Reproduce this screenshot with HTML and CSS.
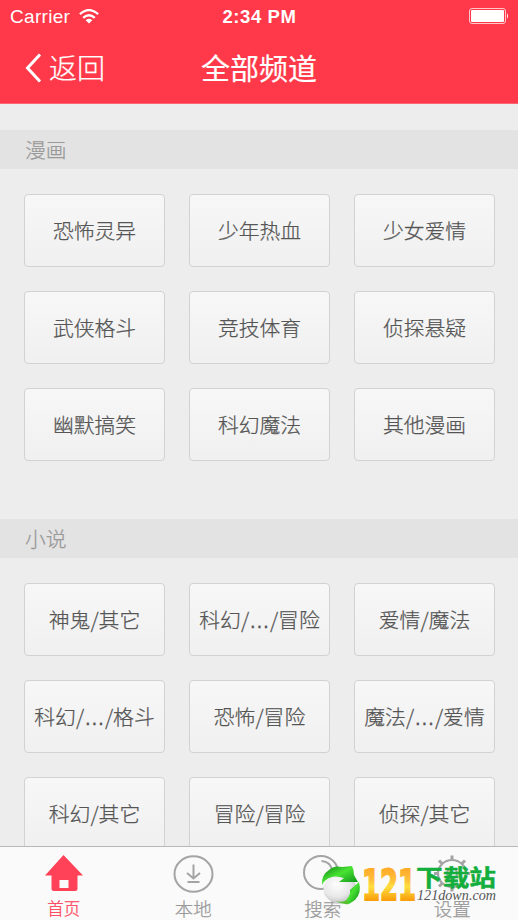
FILE: index.html
```html
<!DOCTYPE html>
<html lang="zh-CN">
<head>
<meta charset="utf-8">
<title>全部频道</title>
<link rel="stylesheet" href="styles.css">
</head>
<body>
<div class="app">
  <header class="top">
    <div class="status">
      <div class="carrier"><span>Carrier</span>
        <svg width="20" height="15" viewBox="0 0 20 15" fill="none" stroke="#fff" stroke-width="2.4"><path d="M.9 5.2Q10-3 19.1 5.2M4.2 8.8Q10 3.7 15.8 8.8"/><path d="M6.700 11.200Q10 8.300 13.300 11.200L10 14.500Z" fill="#fff" stroke="none"/></svg>
      </div>
      <div class="time">2:34 PM</div>
      <svg class="battery" width="40" height="17" viewBox="0 0 40 17"><rect x=".5" y=".5" width="36" height="15" rx="2.5" fill="none" stroke="#fff" stroke-opacity=".7"/><rect x="2" y="2" width="33" height="12" rx="1" fill="#fff"/><path d="M38 5Q40 8 38 11Z" fill="#fff"/></svg>
    </div>
    <nav class="nav">
      <div class="back"><svg width="17" height="30" viewBox="0 0 17 30" fill="none" stroke="#fff" stroke-width="3"><path d="M15 1.5 2.5 15 15 28.5"/></svg><span>返回</span></div>
      <h1>全部频道</h1>
    </nav>
  </header>
  <main>
    <section>
      <h2>漫画</h2>
      <div class="grid">
        <button>恐怖灵异</button><button>少年热血</button><button>少女爱情</button>
        <button>武侠格斗</button><button>竞技体育</button><button>侦探悬疑</button>
        <button>幽默搞笑</button><button>科幻魔法</button><button>其他漫画</button>
      </div>
    </section>
    <section>
      <h2>小说</h2>
      <div class="grid">
        <button>神鬼/其它</button><button>科幻/<i>…</i>/冒险</button><button>爱情/魔法</button>
        <button>科幻/<i>…</i>/格斗</button><button>恐怖/冒险</button><button>魔法/<i>…</i>/爱情</button>
        <button>科幻/其它</button><button>冒险/冒险</button><button>侦探/其它</button>
      </div>
    </section>
  </main>
  <footer class="tabs">
    <div class="tab active"><svg width="42" height="42" viewBox="0 0 42 42"><path d="M19.500 3 39 23.500h-5.500V36.500q0 2.500-2.500 2.500H10Q7.500 39 7.500 36.500V23.500H1Z" fill="#ff4257"/><rect x="15.500" y="28" width="9" height="8" fill="#fafafa"/></svg><span>首页</span></div>
    <div class="tab"><svg width="42" height="42" viewBox="0 0 42 42" fill="none" stroke="#a4a4a4" stroke-width="2"><ellipse cx="20.500" cy="22" rx="19" ry="17.800"/><path d="M20.500 12.500v13.500M14 21l6.500 5.500 6.500-5.500M14.500 30h12"/></svg><span>本地</span></div>
    <div class="tab"><svg width="42" height="42" viewBox="0 0 42 42" fill="none" stroke="#a4a4a4" stroke-width="2"><ellipse cx="18" cy="20.500" rx="17" ry="16.500"/><path d="M18.500 9q9 .5 11 10M30 32l9 8"/></svg><span>搜索</span></div>
    <div class="tab"><svg width="42" height="42" viewBox="0 0 42 42" fill="none" stroke="#a4a4a4" stroke-width="2.200"><ellipse cx="20" cy="21.500" rx="14" ry="13.500"/><circle cx="20" cy="21.500" r="5"/><path d="M20 8V3.500M20 35v4.500M6 21.500H2M34 21.500h4M10.500 12 7 8.500M29.500 12l3.500-3.500M10.500 31 7 34.500M29.500 31l3.500 3.500" stroke-width="3"/></svg><span>设置</span></div>
  </footer>
  <svg class="mark" width="190" height="56" viewBox="0 0 190 56">
    <defs>
      <linearGradient id="gold" gradientUnits="userSpaceOnUse" x1="0" y1="6" x2="0" y2="39"><stop offset="0" stop-color="#ffa726"/><stop offset=".4" stop-color="#ffc03a"/><stop offset=".6" stop-color="#ffdf3e"/><stop offset="1" stop-color="#f99f0d"/></linearGradient>
      <linearGradient id="leaf" x1="0" y1="0" x2="1" y2="1"><stop offset="0" stop-color="#087c12"/><stop offset=".45" stop-color="#49e333"/><stop offset="1" stop-color="#078915"/></linearGradient>
      <radialGradient id="ball" cx=".4" cy=".35" r=".7"><stop offset="0" stop-color="#fff"/><stop offset=".6" stop-color="#e8e8e8"/><stop offset="1" stop-color="#bbb"/></radialGradient>
    </defs>
    <ellipse cx="19" cy="28" rx="16.500" ry="14.500" fill="url(#ball)"/>
    <path d="M1 24Q0 14 8 9Q13 4 21 6L31 5Q33 9 33 14L37 21 18 21 23 17Q12 13 5 19Q2 21 1 24Z" fill="url(#leaf)"/>
    <path d="M38 21Q41 32 34 39L28 43 25 39Q30 34 29 29Z" fill="url(#leaf)"/>
    <path d="M15 40Q21 42 26 39L28 43Q21 44 15 40Z" fill="#58bf35"/>
    <text class="digits" x="41" y="38.500" textLength="54" lengthAdjust="spacingAndGlyphs" fill="url(#gold)" stroke="url(#gold)">121</text>
    <text class="name" x="95" y="25.300" textLength="80" lengthAdjust="spacingAndGlyphs">下载站</text>
    <text class="domain" x="96" y="38.500" textLength="79" lengthAdjust="spacingAndGlyphs">121down.com</text>
  </svg>
</div>
</body>
</html>
```
FILE: styles.css
```css
* { box-sizing: border-box; }
body { margin: 0; font-family: "Noto Sans CJK SC", sans-serif; }
.app { position: relative; display: flex; flex-direction: column; height: 920px; overflow: hidden; background: #ededed; }
.top { flex: none; height: 104px; background: #ff3949; color: #fff; border-bottom: 1px solid #ff6673; }
.status { display: grid; grid-template-columns: 1fr auto 1fr; align-items: center; height: 33px; padding: 0 9px 0 10px; font: 19px "Liberation Sans", sans-serif; }
.carrier { display: flex; align-items: center; gap: 9px; letter-spacing: .3px; }
.time { font-weight: 700; font-size: 18.5px; letter-spacing: .6px; }
.battery { justify-self: end; }
.nav { display: grid; grid-template-columns: 1fr auto 1fr; align-items: center; height: 69px; }
.back { display: flex; align-items: center; gap: 7px; padding-left: 25px; font-size: 28px; line-height: 40px; font-weight: 300; -webkit-text-stroke: .25px; }
.back span { margin-top: -1px; }
h1 { margin: -2px 0 0; font-size: 29px; line-height: 40px; font-weight: 400; -webkit-text-stroke: .2px; }
main { flex: 1; min-height: 0; overflow: hidden; padding-top: 26px; }
h2 { margin: 0; height: 39px; padding-left: 25px; background: #e3e3e3; color: #999; font-size: 20.8px; line-height: 38px; font-weight: 300; -webkit-text-stroke: .25px; }
.grid { display: grid; grid-template-columns: repeat(3, 141px); grid-auto-rows: 73px; gap: 24px; padding: 25px 0 58px 24px; }
button { padding: 0 0 2px; border: 1px solid #d2d2d2; border-radius: 4px; background: linear-gradient(#f7f7f7, #f0f0f0); color: #555; font: 300 20.8px/30px "Noto Sans CJK SC", sans-serif; white-space: nowrap; -webkit-text-stroke: .25px; }
button i { font-family: "Liberation Sans", sans-serif; font-style: normal; line-height: 1; }
.tabs { flex: none; display: grid; grid-template-columns: repeat(4, 1fr); height: 74px; border-top: 1px solid #b8b8b8; background: #fafafa; }
.tab { display: flex; flex-direction: column; align-items: center; padding-top: 5px; color: #999; font-size: 18.5px; line-height: 28px; font-weight: 300; -webkit-text-stroke: .25px; }
.tab span { margin-right: 2px; }
.tab svg { display: block; flex: none; }
.active { color: #ff4257; font-size: 16.5px; }
.mark { position: absolute; left: 321px; top: 861px; overflow: visible; }
.digits { font: 700 43px "DejaVu Sans", sans-serif; stroke-width: 2px; }
.name { font: 700 22.5px "Noto Sans CJK SC", sans-serif; fill: #13ae3b; stroke: #13ae3b; stroke-width: .4px; }
.domain { font: italic 14px "Liberation Serif", serif; fill: #555; }
```
